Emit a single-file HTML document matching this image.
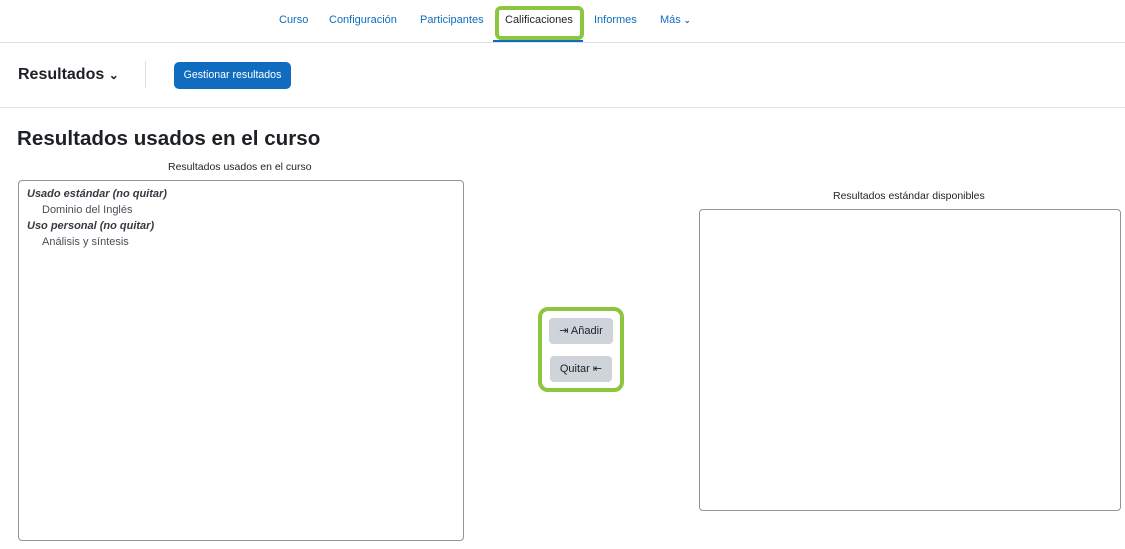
<!DOCTYPE html>
<html><head><meta charset="utf-8"><style>
*{box-sizing:border-box;margin:0;padding:0}
body{width:1125px;height:549px;background:#fff;font-family:"Liberation Sans",sans-serif;color:#1d2125;position:relative;overflow:hidden}
.a{position:absolute;white-space:nowrap}
.nav{color:#0f6cbf;font-size:11px;top:14px}
.box{position:absolute;border:1px solid #8f959e;border-radius:4px;background:#fff}
.btn{position:absolute;background:#ced4da;border-radius:4px;font-size:11px;color:#1d2125;text-align:center;line-height:26px}
</style></head><body>
<div class="a nav" style="left:279px">Curso</div>
<div class="a nav" style="left:329px">Configuración</div>
<div class="a nav" style="left:420px">Participantes</div>
<div class="a nav" style="left:505px;color:#1d2125">Calificaciones</div>
<div class="a nav" style="left:594px">Informes</div>
<div class="a nav" style="left:660px">Más <span style="font-size:8px;font-weight:bold">⌄</span></div>
<div class="a" style="left:495px;top:6px;width:89px;height:34px;border:4px solid #8cc63f;border-radius:6px"></div>
<div class="a" style="left:493px;top:40px;width:90px;height:3px;background:#0f6cbf"></div>
<div class="a" style="left:0;top:42px;width:1125px;height:1px;background:#dee2e6"></div>
<div class="a" style="left:18px;top:66px;font-size:16px;font-weight:bold">Resultados <span style="font-size:12px">⌄</span></div>
<div class="a" style="left:145px;top:61px;width:1px;height:27px;background:#dee2e6"></div>
<div class="a" style="left:174px;top:62px;width:117px;height:27px;background:#0f6cbf;border-radius:5px;color:#fff;font-size:10.6px;text-align:center;line-height:27px">Gestionar resultados</div>
<div class="a" style="left:0;top:107px;width:1125px;height:1px;background:#dee2e6"></div>
<div class="a" style="left:17px;top:127px;font-size:20.6px;font-weight:bold">Resultados usados en el curso</div>
<div class="a" style="left:168px;top:161px;font-size:10.5px">Resultados usados en el curso</div>
<div class="box" style="left:18px;top:180px;width:446px;height:361px"></div>
<div class="a" style="left:27px;top:186px;font-size:11px;font-weight:bold;font-style:italic;line-height:16px;color:#343a40">Usado estándar (no quitar)<br><span style="font-weight:normal;font-style:normal;padding-left:15px;color:#495057">Dominio del Inglés</span><br>Uso personal (no quitar)<br><span style="font-weight:normal;font-style:normal;padding-left:15px;color:#495057">Análisis y síntesis</span></div>
<div class="a" style="left:538px;top:307px;width:86px;height:85px;border:4px solid #8cc63f;border-radius:10px"></div>
<div class="btn" style="left:549px;top:318px;width:64px">⇥ Añadir</div>
<div class="btn" style="left:550px;top:356px;width:62px">Quitar ⇤</div>
<div class="a" style="left:833px;top:190px;font-size:10.5px">Resultados estándar disponibles</div>
<div class="box" style="left:699px;top:209px;width:422px;height:302px"></div>
</body></html>
